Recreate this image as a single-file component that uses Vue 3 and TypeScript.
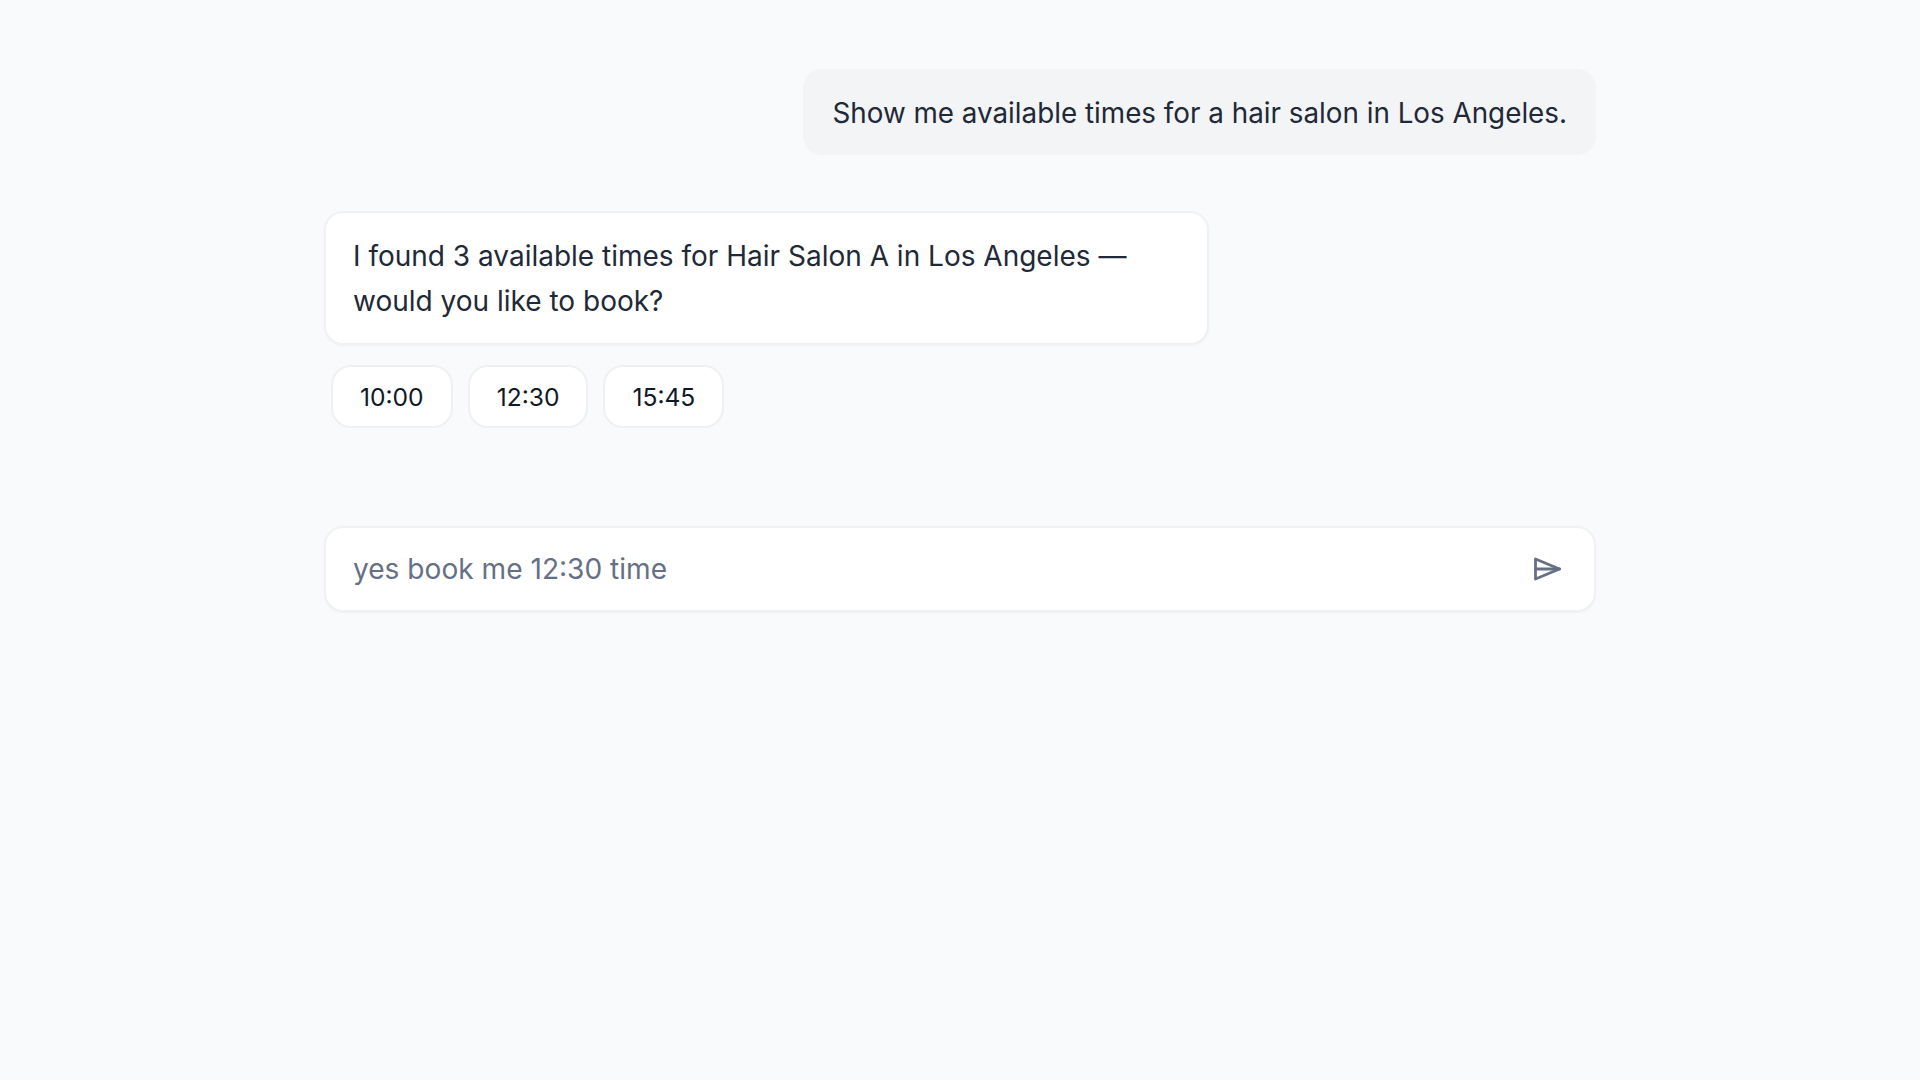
<script setup lang="ts">
const times: string[] = ['10:00', '12:30', '15:45']
</script>

<template>
  <main class="page">
    <section class="chat">
      <div class="user-row">
        <div class="user-bubble">Show me available times for a hair salon in Los Angeles.</div>
      </div>
      <div class="bot-bubble">I found 3 available times for Hair Salon A in Los Angeles — would you like to book?</div>
      <div class="chips">
        <button v-for="t in times" :key="t" class="chip" type="button">{{ t }}</button>
      </div>
      <div class="composer">
        <span class="typed">yes book me 12:30 time</span>
        <svg class="send" width="30" height="26" viewBox="0 0 30 26" fill="none" stroke="#667085" stroke-width="2.8" stroke-linejoin="round" stroke-linecap="round">
          <path d="M2.5 3 L26.5 13 L2.5 23 Z" />
          <path d="M2.5 13 H26.5" />
        </svg>
      </div>
    </section>
  </main>
</template>

<style scoped>
.page {
  min-height: 1080px;
  background: #f9fafb;
  font-family: Inter, "Liberation Sans", sans-serif;
  color: #1f2937;
  box-sizing: border-box;
  padding-top: 69px;
}
.chat {
  width: 1272px;
  margin: 0 auto;
  display: flex;
  flex-direction: column;
  align-items: flex-start;
}
.user-row {
  align-self: stretch;
  display: flex;
  justify-content: flex-end;
}
.user-bubble {
  background: #f3f4f6;
  border-radius: 19px;
  padding: 22px 29px 19px;
  font-size: 27.8px;
  line-height: 45px;
}
.bot-bubble {
  margin-top: 56px;
  width: 885px;
  box-sizing: border-box;
  background: #fff;
  border: 2px solid #f0f1f4;
  border-radius: 19px;
  box-shadow: 0 1px 2px rgba(17, 24, 39, 0.04);
  padding: 21px 27px 19px;
  font-size: 28px;
  line-height: 45px;
}
.chips {
  margin-top: 20px;
  margin-left: 7px;
  display: flex;
  gap: 15px;
}
.chip {
  height: 63px;
  padding: 0 27px;
  background: #fff;
  border: 2px solid #eef0f3;
  border-radius: 20px;
  font-family: inherit;
  font-size: 24.6px;
  color: #111827;
}
.composer {
  margin-top: 98px;
  height: 86px;
  align-self: stretch;
  box-sizing: border-box;
  background: #fff;
  border: 2px solid #f0f1f4;
  border-radius: 19px;
  box-shadow: 0 1px 2px rgba(17, 24, 39, 0.04);
  padding: 0 31px 0 27px;
  display: flex;
  align-items: center;
  justify-content: space-between;
}
.typed {
  font-size: 28.1px;
  color: #667085;
}
.send {
  display: block;
}
</style>
